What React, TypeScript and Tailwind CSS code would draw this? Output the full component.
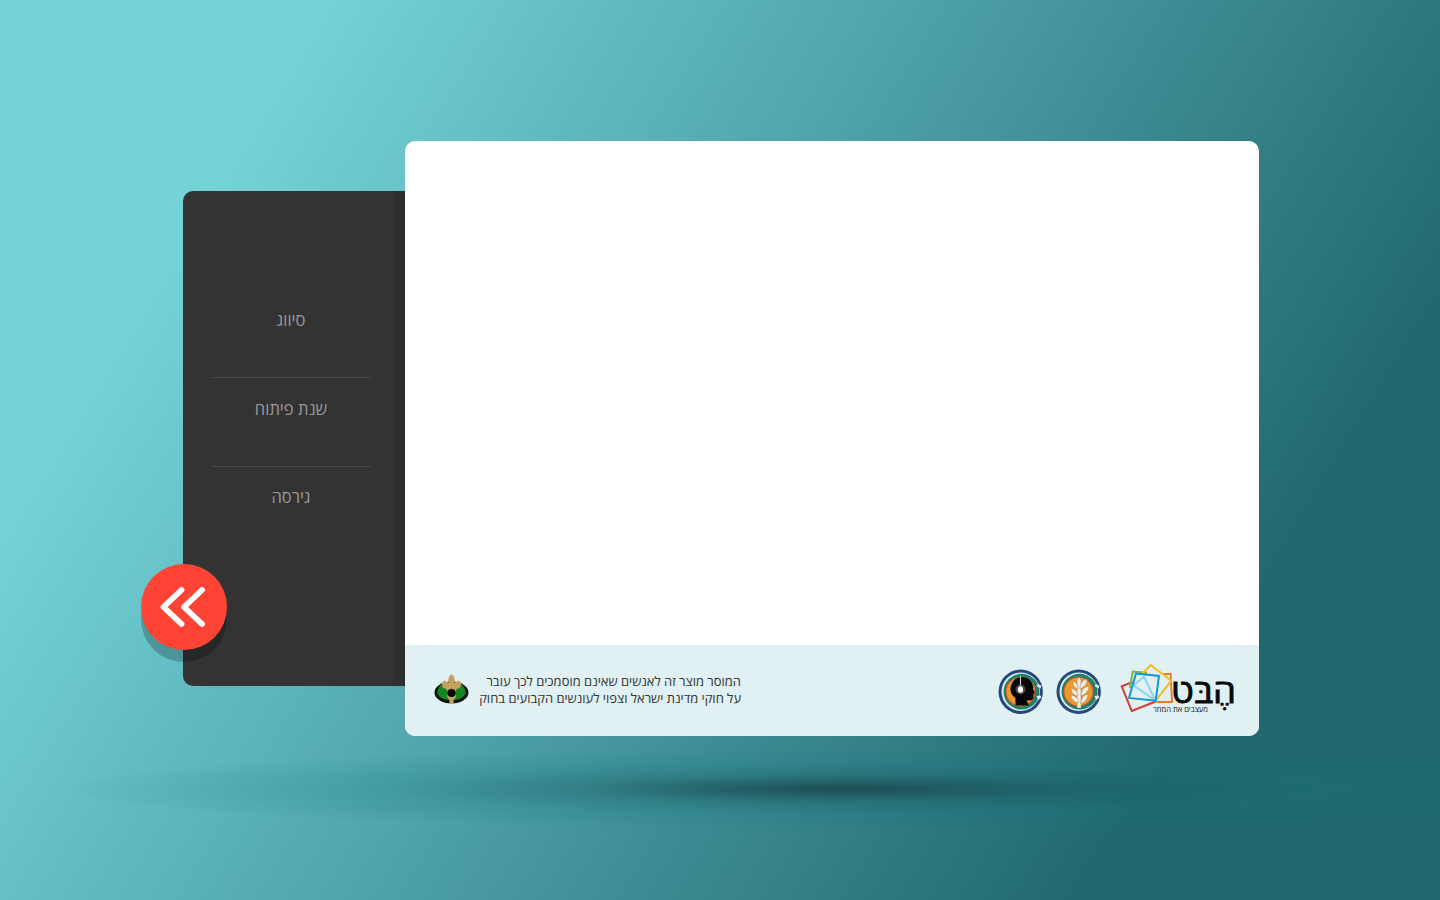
const Side = ({ children, line }: { children: string; line?: boolean }) => (
  <div className={line ? "h-[89px] border-b border-[#484848] pt-[20px]" : "h-[88px] pt-[19px]"}>
    <div className="pr-px text-center text-[16.500px] leading-[22px] text-[#999999]">{children}</div>
  </div>
);

const Badge = ({ kind }: { kind: "head" | "plant" }) => (
  <svg className="h-[46px] w-[46px]" viewBox="0 0 46 46">
    <circle cx="22.700" cy="22.700" r="22.2" fill="#25477b" />
    <circle cx="22.700" cy="22.700" r="19.2" fill="#d8eef0" />
    <circle cx="23.500" cy="22.700" r="17.900" fill="#1f7f68" />
    <circle cx="22.500" cy="22.700" r="15" fill="#cf5530" />
    <circle cx="22.500" cy="22.700" r="14" fill="#ee9827" />
    <path d="M38.500 17l2-2.500 1.500 2 1.500-.5-1 3.500zM38.500 27l4-.5 1 3-1.500-.5-1.500 2.500z" fill="#e8f4f5" />
    {kind === "head" ? (
      <g>
        <path d="M17.500 36.500V29Q12 25 12.500 19Q14 8.500 24 8Q33 8.500 35 17V20L37 24L35.500 25L35.500 29Q34 32 28.500 31.500L31 36.500Z" fill="#050505" />
        <path d="M22.500 7V17" stroke="#ccc" strokeWidth="1.200" />
        <circle cx="22.500" cy="20.500" r="5" fill="#777" opacity=".6" />
        <ellipse cx="22.500" cy="20.500" rx="2.600" ry="3.200" fill="#fff" />
      </g>
    ) : (
      <g fill="#f1ece3" stroke="#8c744f" strokeWidth=".4">
        <path d="M21 39V11L23 8L25 11V39Z" />
        <path d="M21 20Q16 17 17 12Q22 14 22 20ZM24 18Q25 11 31 10Q32 16 24 20ZM21 27Q15 25 15 19Q22 21 22 27ZM25 25Q26 18 33 17Q33 24 25 27ZM22 34Q15 32 15 26Q22 27 23 34ZM25 33Q26 26 32 25Q32 32 25 35Z" />
      </g>
    )}
  </svg>
);

const Logo = () => (
  <svg className="h-[60px] w-[125px]" viewBox="0 0 125 60">
    <g fill="none" strokeWidth="2" strokeLinejoin="miter">
      <path d="M48 13H56.700L58 41H41.700" stroke="#ef7b25" />
      <path d="M18.700 21L7.700 25.300L17.700 50L41.700 40.500" stroke="#d83b36" />
      <path d="M33 11.800L18.700 10.500L16 27" stroke="#79b64b" />
      <path d="M41.700 39.700L19.500 24.500L30 15.700Z" stroke="#8bd5ee" />
      <path d="M28 13L36.700 4L57.300 19.700L41.700 39.700" stroke="#f6bd22" />
      <path d="M22 12.500L45 14.900L41.700 39.700L15 36.900Z" stroke="#1499d6" />
    </g>
    <text x="122" y="41.800" direction="rtl" textLength="65" lengthAdjust="spacingAndGlyphs" fontFamily="Open Sans, sans-serif" fontSize="33.5" fill="#080808" stroke="#080808" strokeWidth=".8">הֶבּט</text>
    <text x="94" y="51" direction="rtl" textLength="55" lengthAdjust="spacingAndGlyphs" fontFamily="Open Sans, sans-serif" fontSize="8" fill="#151515">מעצבים את המחר</text>
  </svg>
);

const Scout = () => (
  <svg className="mb-[2px] h-[34px] w-[36px]" viewBox="0 0 36 34">
    <ellipse cx="17.500" cy="19.500" rx="17" ry="11" fill="#111" />
    <path d="M3.500 18Q6 9 14 9L16 27Q7 27 3.500 21ZM31.500 18Q29 9 21 9L19 27Q28 27 31.500 21Z" fill="#168421" />
    <path d="M17.500 1Q22.500 5 20 10L25 7.500Q29 10 25.500 15.500Q23 14 21 19L22 24L19.500 27V31H15.500V27L13 24L14 19Q12 14 9.500 15.500Q6 10 10 7.500L15 10Q12.500 5 17.500 1Z" fill="#c5a05e" />
    <circle cx="17.500" cy="20" r="4" fill="#080808" />
  </svg>
);

export default function App() {
  return (
    <main className="relative isolate flex h-[900px] w-[1440px] items-start overflow-hidden bg-[linear-gradient(121.5deg,#74d2d9_16.5%,#45959c_54%,#20686f_82%)] pt-[141px] pl-[183px] font-['Open_Sans',sans-serif]">
      <div className="absolute top-[749px] left-[70px] -z-10 h-[80px] w-[1540px] bg-[radial-gradient(ellipse_closest-side,rgba(25,72,77,0.9)_0%,rgba(25,80,86,0.7)_14%,rgba(24,95,102,0.4)_34%,rgba(20,117,126,0.22)_60%,rgba(20,117,126,0.03)_98%,transparent_100%)]" />
      <aside dir="rtl" className="relative mt-[50px] h-[495px] w-[222px] rounded-l-[10px] bg-[linear-gradient(to_left,#2e2e2e_12px,#333333_12px)] pt-[98px] pr-[34px] pl-[29px]">
        <Side line>סיווג</Side>
        <Side line>שנת פיתוח</Side>
        <Side>גירסה</Side>
        <button dir="ltr" aria-label="«" className="absolute top-[373px] left-[-42px] flex h-[86px] w-[86px] items-center justify-center rounded-full bg-[#ff4435] shadow-[0_12px_0_rgba(0,0,0,0.22)]">
          <svg className="h-[86px] w-[86px]" viewBox="0 0 86 86" fill="none" stroke="#fff" strokeWidth="5.800" strokeLinecap="round" strokeLinejoin="round">
            <path d="M40.500 26L22.500 43L40.500 60M61 26L43 43L61 60" />
          </svg>
        </button>
      </aside>
      <section className="flex h-[595px] w-[854px] flex-col overflow-hidden rounded-[10px] bg-white">
        <div className="flex-1" />
        <footer className="flex h-[91px] items-center bg-[#e0f0f3] pr-[20px] pl-[29px]">
          <Scout />
          <div dir="rtl" className="mb-px ml-[8px] w-[263px] text-[12.950px] leading-[17px] whitespace-nowrap text-[#333]">
            <p>המוסר מוצר זה לאנשים שאינם מוסמכים לכך עובר</p>
            <p>על חוקי מדינת ישראל וצפוי לעונשים הקבועים בחוק</p>
          </div>
          <div className="ml-auto flex items-center">
            <div className="pt-[2px]"><Badge kind="head" /></div>
            <div className="ml-[12px] pt-[2px]"><Badge kind="plant" /></div>
            <div className="ml-[12px]"><Logo /></div>
          </div>
        </footer>
      </section>
    </main>
  );
}
